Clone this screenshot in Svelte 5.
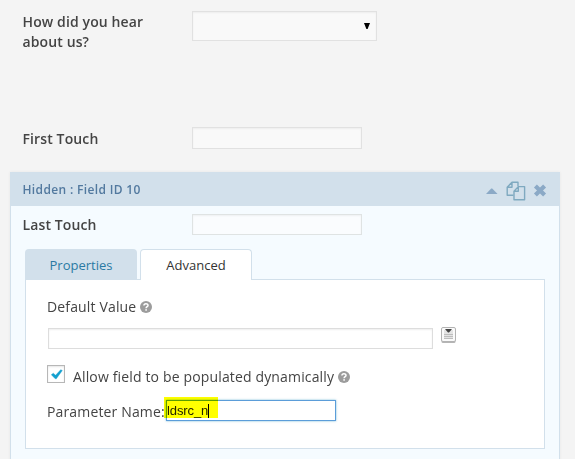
<script>
  let heard = $state('');
  let firstTouch = $state('');
  let lastTouch = $state('');
  let defaultValue = $state('');
  let parameter = $state('ldsrc_n');
</script>

{#snippet help()}
  <svg class="help" width="12" height="12" viewBox="0 0 12 12">
    <circle cx="6" cy="6" r="6" fill="#9c9c9c" />
    <path d="M3.9 4.5C4 2.2 8 2.2 8 4.4C8 5.7 6.1 5.6 6.1 7.3" fill="none" stroke="#fff" stroke-width="1.5" />
    <rect x="5.3" y="8.2" width="1.6" height="1.5" fill="#fff" />
  </svg>
{/snippet}

<main>
  <div class="row question">
    <div class="label">How did you hear<br />about us?</div>
    <div class="field select" role="listbox" aria-label={heard}>
      <svg width="6" height="6" viewBox="0 0 6 6"><path d="M0 0H6L3.6 6H2.4Z" fill="#000" /></svg>
    </div>
  </div>

  <div class="row first">
    <div class="label">First Touch</div>
    <input class="field small" bind:value={firstTouch} />
  </div>

  <section class="panel">
    <header>
      <span class="title">Hidden : Field ID 10</span>
      <svg class="collapse" width="12" height="6" viewBox="0 0 12 6"><path d="M0 6L5.2 .4H6.2L11.6 6Z" fill="#8ba9c6" /></svg>
      <svg class="copy" width="20" height="20" viewBox="0 0 20 20" fill="none" stroke="#7fa9c0" stroke-width="1.4" stroke-linejoin="round">
        <path d="M7.5 14.3H1.2V6.2L6 1.2H12V5.3M6 1.2V6.2H1.2" />
        <path d="M12.3 5.6H18.6V18.8H8V10.3ZM12.3 5.6V10.3H8" />
      </svg>
      <svg class="close" width="14" height="13" viewBox="0 0 14 13"><path d="M2.4 1.9L11.6 11.1M11.6 1.9L2.4 11.1" stroke="#8ba9c6" stroke-width="4.2" /></svg>
    </header>
    <div class="body">
      <div class="row last">
        <div class="label">Last Touch</div>
        <input class="field tiny" bind:value={lastTouch} />
      </div>

      <nav>
        <button class="tab">Properties</button>
        <button class="tab active">Advanced</button>
      </nav>
      <div class="content">
        <div class="line default"><span class="t1">Default Value</span>{@render help()}</div>
        <div class="line merge">
          <input class="value" bind:value={defaultValue} />
          <svg class="picker" width="15" height="17" viewBox="0 0 15 17">
            <rect x=".5" y="1.5" width="14" height="14.5" rx="1.5" fill="#b5b5b5" />
            <rect x=".5" y=".5" width="14" height="14" rx="1.5" fill="#fafafa" stroke="#b3b3b3" />
            <rect x="3" y="3" width="9" height="9" fill="#e4e4e4" />
            <path d="M3 7.5H12M3 9.5H12M3 11.5H12" stroke="#bdbdbd" />
            <path d="M4 2H11L8 5.6H7Z" fill="#444" />
          </svg>
        </div>
        <div class="line allow">
          <span class="check">
            <svg width="12" height="11" viewBox="0 0 12 11"><path d="M.3 5.7L2.3 4.2L4.6 6.3L9.7 .7L11.3 1.5L5.3 9.8H4.3Z" fill="#13a0cf" stroke="#13a0cf" stroke-width=".4" /></svg>
          </span>
          <span class="t2">Allow field to be populated dynamically</span>{@render help()}
        </div>
        <div class="line param">
          <span class="t3">Parameter Name:</span>
          <span class="entry">{parameter}<i class="caret"></i><i class="marker"></i></span>
        </div>
      </div>
    </div>
  </section>
</main>

<style>
  :global(body) { background: #f4f4f4; overflow: hidden; }
  * { box-sizing: border-box; }
  svg { display: block; flex: none; }
  main {
    height: 459px;
    overflow: hidden;
    padding-top: 11px;
    font: 14px/20px "Open Sans", "Noto Sans", sans-serif;
    color: #444;
  }
  .row { display: flex; align-items: flex-start; padding-left: 22.5px; }
  .label { width: 169.5px; flex: none; font-weight: 600; font-size: 14px; letter-spacing: .12px; }
  .field {
    width: 170px;
    padding: 0;
    border: 1px solid #e1e1e1;
    border-radius: 0;
    background: #f9f9f9;
    box-shadow: inset 0 1px 2px rgba(0, 0, 0, .05);
    outline: none;
  }
  .question { height: 116px; }
  .question .label { padding-top: 1px; }
  .select { width: 185px; height: 30px; display: flex; justify-content: flex-end; padding: 11px 6px 0 0; }
  .first { height: 45px; }
  .first .label { padding-top: 2px; }
  .small { height: 22px; }
  .tiny { height: 21px; background: #fafcfe; border-color: #dfe3e3; }
  .panel { margin-left: 10px; width: 550px; height: 300px; box-shadow: 0 0 3px rgba(0, 0, 0, .06); }
  header { height: 34px; background: #d2e0eb; display: flex; align-items: flex-start; padding-left: 12.5px; }
  .title { width: 463.5px; padding-top: 8px; font-size: 12px; font-weight: 600; line-height: 20px; letter-spacing: .35px; color: #52799f; }
  .collapse { margin-top: 16px; }
  .copy { margin: 9px 0 0 8px; }
  .close { margin: 12px 0 0 7px; }
  .body { height: 270px; background: #f5fbff; border: solid #d2e0eb; border-width: 0 1px; padding: 8px 14px 0; }
  .last { height: 35px; padding-left: 0; margin-left: -2.5px; }
  .last .label { padding-top: 1px; }
  nav { display: flex; gap: 3px; height: 30px; position: relative; z-index: 1; }
  .tab {
    width: 112px;
    height: 30px;
    padding: 1px 0 0;
    border: 0;
    border-radius: 4px 4px 0 0;
    background: #d2e0eb;
    color: #2a7aa3;
    font: 13px/20px "Open Sans", "Noto Sans", sans-serif;
  }
  .active { height: 31px; padding-top: 0; background: #fff; border: 1px solid #d2e0eb; border-bottom: 0; color: #333; }
  .content { width: 520px; height: 170px; background: #fff; border: 1px solid #d2e0eb; padding: 17px 0 0 21px; }
  .line { display: flex; align-items: flex-start; white-space: nowrap; letter-spacing: .15px; }
  .default { height: 31px; }
  .help { margin: 4px 0 0 4px; }
  .merge { height: 37px; margin-left: 1px; }
  .value { width: 385px; height: 21px; margin: 0 8px 0 0; padding: 0; border: 1px solid #ddd; box-shadow: inset 0 1px 2px rgba(0, 0, 0, .07); outline: none; }
  .picker { margin-top: -1px; }
  .allow { height: 35px; }
  .check { width: 18px; height: 18px; margin-right: 8px; border: 1px solid #b7b7b7; background: #fff; padding: 3px 0 0 3px; box-shadow: inset 0 1px 2px rgba(0, 0, 0, .1); }
  .t2 { padding-top: 2px; }
  .allow .help { margin-top: 6px; }
  .t3 { width: 119px; padding-top: 2px; }
  .entry {
    position: relative;
    display: flex;
    width: 170px;
    height: 21px;
    padding-left: 0;
    border: 1px solid #5b9dd9;
    box-shadow: 0 0 2px rgba(30, 140, 190, .6);
    font: 13px/20px "Liberation Sans", Arial, sans-serif;
    letter-spacing: -.1px;
    color: #222;
  }
  .caret { width: 1px; height: 14px; margin-top: 3px; background: #000; }
  .marker { position: absolute; left: -3px; top: -4px; width: 54px; height: 21px; background: #ff0; mix-blend-mode: multiply; }
</style>
